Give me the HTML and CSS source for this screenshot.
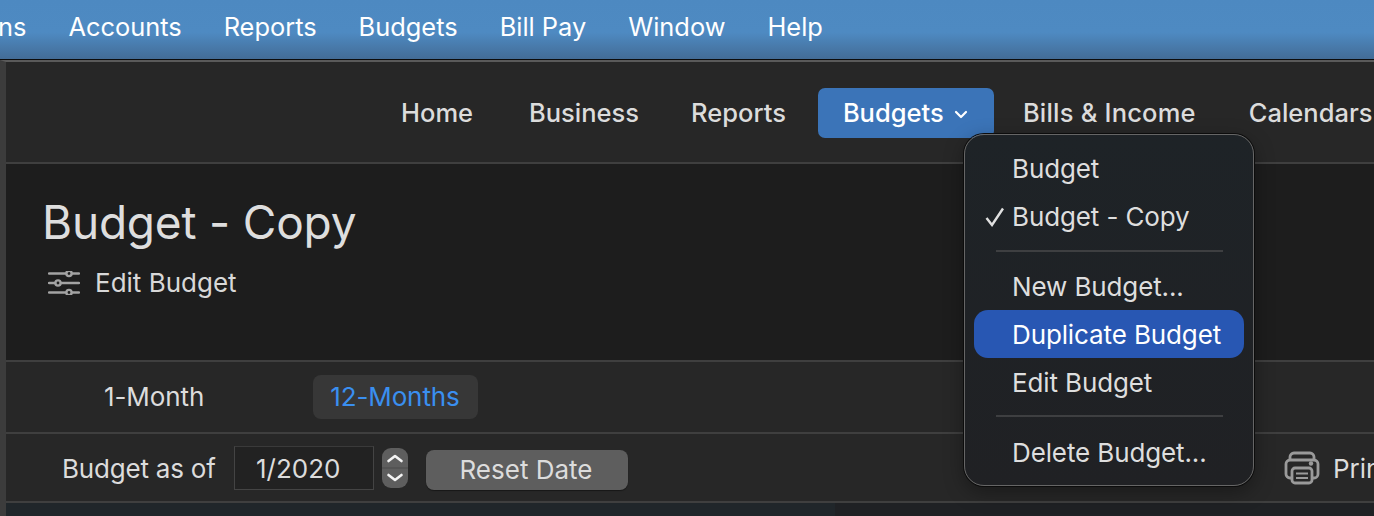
FILE: index.html
```html
<!DOCTYPE html>
<html lang="en">
<head>
    <meta charset="UTF-8">
    <title>Budget - Copy</title>
    <link rel="stylesheet" href="styles.css">
</head>
<body>
    <div class="menubar">
        <span class="menubar-item first">ns</span>
        <span class="menubar-item">Accounts</span>
        <span class="menubar-item">Reports</span>
        <span class="menubar-item">Budgets</span>
        <span class="menubar-item">Bill Pay</span>
        <span class="menubar-item">Window</span>
        <span class="menubar-item">Help</span>
    </div>

    <div class="window">
        <div class="navbar">
            <span class="nav-item home">Home</span>
            <span class="nav-item business">Business</span>
            <span class="nav-item reports">Reports</span>
            <span class="nav-item active">Budgets
                <svg class="nav-chevron" viewBox="0 0 14 9" width="14" height="9"><path d="M2 2l5 5 5-5" fill="none" stroke="#fff" stroke-width="2.200" stroke-linecap="round" stroke-linejoin="round"/></svg>
            </span>
            <span class="nav-item bills">Bills &amp; Income</span>
            <span class="nav-item calendars">Calendars</span>
        </div>

        <div class="header">
            <h1>Budget - Copy</h1>
            <div class="edit-link">
                <svg viewBox="0 0 32 24" width="32" height="24">
                    <path d="M1 2.500h30M1 12h30M1 21.500h30" stroke="#a3a3a3" stroke-width="2.400" stroke-linecap="round" fill="none"/>
                    <g stroke="#a3a3a3" stroke-width="2.400" fill="#1d1d1d">
                        <circle cx="21" cy="2.500" r="2.600"/>
                        <circle cx="10" cy="12" r="2.600"/>
                        <circle cx="21" cy="21.500" r="2.600"/>
                    </g>
                </svg>
                <span>Edit Budget</span>
            </div>
        </div>

        <div class="tabs">
            <span class="tab">1-Month</span>
            <span class="tab selected">12-Months</span>
        </div>

        <div class="toolbar">
            <span class="as-of">Budget as of</span>
            <span class="date-field">1/2020</span>
            <span class="stepper">
                <svg viewBox="0 0 26 40" width="26" height="40">
                    <path d="M6.500 13l6.500-5 6.500 5M6.500 27l6.500 5 6.500-5" fill="none" stroke="#f4f4f4" stroke-width="2.600" stroke-linecap="round" stroke-linejoin="round"/>
                    <path d="M0 20h26" stroke="#4a4a4a" stroke-width="1"/>
                </svg>
            </span>
            <span class="reset-btn">Reset Date</span>
            <span class="print">
                <svg viewBox="0 0 36 34" width="36" height="34">
                    <g fill="none" stroke="#9a9a9a" stroke-width="2.800" stroke-linejoin="round">
                        <path d="M6 9V6a4 4 0 0 1 4-4h16a4 4 0 0 1 4 4v3"/>
                        <path d="M7 27H6a4 4 0 0 1-4-4V13a4 4 0 0 1 4-4h24a4 4 0 0 1 4 4v10a4 4 0 0 1-4 4h-1"/>
                        <rect x="8" y="17" width="20" height="15" rx="3"/>
                    </g>
                    <path d="M12 22.500h12M12 27h12" stroke="#9a9a9a" stroke-width="2"/>
                    <circle cx="27" cy="12.500" r="2.200" fill="#9a9a9a"/>
                </svg>
                <span>Print</span>
            </span>
        </div>

        <div class="bottom">
            <div class="bottom-left"></div>
            <div class="bottom-right"></div>
        </div>
    </div>

    <div class="menu">
        <div class="menu-item">Budget</div>
        <div class="menu-item checked">
            <svg class="check" viewBox="0 0 20 20" width="20" height="20"><path d="M1.500 11l5.500 7L18 1.500" fill="none" stroke="#e0e0e0" stroke-width="2.400"/></svg>
            Budget - Copy
        </div>
        <div class="menu-sep"></div>
        <div class="menu-item low">New Budget...</div>
        <div class="menu-item low hover">Duplicate Budget</div>
        <div class="menu-item low">Edit Budget</div>
        <div class="menu-sep last"></div>
        <div class="menu-item low">Delete Budget...</div>
    </div>
</body>
</html>
```

FILE: styles.css
```css
html, body {
    margin: 0;
    padding: 0;
    height: 516px;
    overflow: hidden;
}

body {
    font-family: 'Inter', 'Liberation Sans', sans-serif;
    background: #272727;
    color: #e0e0e0;
    position: relative;
}

.menubar {
    display: flex;
    align-items: center;
    gap: 42px;
    box-sizing: border-box;
    height: 60px;
    padding-bottom: 6px;
    background: linear-gradient(180deg, #4d89c1 0%, #4e8ac2 55%, #436c96 100%);
    border-bottom: 1px solid #0c0c0c;
    color: #fff;
    font-size: 25.400px;
    white-space: nowrap;
}

.menubar-item.first {
    margin-left: -2px;
}

.window {
    border-left: 6px solid #3c3c3c;
    border-top: 2px solid #5a5a5a;
    box-sizing: border-box;
    height: 456px;
    display: flex;
    flex-direction: column;
}

.navbar {
    height: 100px;
    flex: none;
    display: flex;
    align-items: center;
    padding-left: 395px;
    box-sizing: border-box;
    background: #272727;
    font-size: 25.500px;
    font-weight: 500;
    color: #dcdcdc;
    white-space: nowrap;
}

.nav-item {
    flex: none;
}

.home { margin-right: 56px; }
.business { margin-right: 52px; }
.reports { margin-right: 32px; }
.bills { margin-left: 29px; margin-right: 53px; letter-spacing: 0.2px; }

.nav-item.active {
    width: 176px;
    height: 50px;
    margin-top: 2px;
    padding: 0 0 2px 25px;
    box-sizing: border-box;
    display: flex;
    align-items: center;
    gap: 10px;
    background: #3b74b8;
    border-radius: 7px;
    color: #fff;
}

.nav-chevron {
    margin-top: 5px;
}

.header {
    height: 200px;
    flex: none;
    box-sizing: border-box;
    padding: 30px 0 0 36px;
    background: #1d1d1d;
    border-top: 2px solid #3f3f3f;
    border-bottom: 2px solid #3f3f3f;
}

h1 {
    margin: 0;
    font-size: 46px;
    line-height: 56px;
    font-weight: 400;
    color: #dedede;
    letter-spacing: -0.2px;
}

.edit-link {
    margin-top: 17px;
    margin-left: 6px;
    display: flex;
    align-items: center;
    gap: 15px;
    font-size: 26px;
    color: #d8d8d8;
}

.tabs {
    height: 70px;
    flex: none;
    display: flex;
    align-items: center;
    padding-left: 98px;
    font-size: 26px;
    color: #dcdcdc;
    letter-spacing: -0.1px;
}

.tab {
    height: 44px;
    line-height: 44px;
    border-radius: 8px;
    margin-right: 109px;
}

.tab.selected {
    padding: 0 18px 0 17px;
    background: #373737;
    color: #3a8ff0;
}

.toolbar {
    height: 71px;
    flex: none;
    box-sizing: border-box;
    display: flex;
    align-items: center;
    padding-left: 56px;
    padding-top: 1px;
    border-top: 2px solid #3f3f3f;
    border-bottom: 2px solid #3f3f3f;
    font-size: 26px;
    color: #dcdcdc;
    white-space: nowrap;
}

.as-of {
    width: 172px;
    flex: none;
    letter-spacing: -0.2px;
}

.date-field {
    width: 140px;
    height: 44px;
    line-height: 44px;
    box-sizing: border-box;
    padding-left: 21px;
    flex: none;
    border: 1px solid #444;
    border-top-color: #3a3a3a;
    background: #222;
}

.stepper {
    width: 26px;
    height: 40px;
    flex: none;
    margin-left: 8px;
    display: flex;
    background: #5e5e5e;
    border-radius: 9px;
}

.reset-btn {
    width: 202px;
    height: 40px;
    line-height: 40px;
    box-sizing: border-box;
    padding-right: 2px;
    flex: none;
    margin-left: 18px;
    margin-top: 3px;
    text-align: center;
    background: #5e5e5e;
    border-radius: 8px;
    box-shadow: 0 1px 1px rgba(0, 0, 0, 0.4);
}

.print {
    flex: none;
    margin-left: 656px;
    display: flex;
    align-items: center;
    gap: 13px;
}

.bottom {
    flex: 1;
    display: flex;
}

.bottom-left {
    width: 829px;
    background: #20262a;
}

.bottom-right {
    flex: 1;
    background: #1f2124;
}

/* dropdown opened under Budgets */
.menu {
    position: absolute;
    left: 964px;
    top: 134px;
    width: 290px;
    height: 352px;
    box-sizing: border-box;
    padding: 10px 9px;
    background: linear-gradient(180deg, #1e2327 0%, #202124 100%);
    border: 1px solid #666;
    border-radius: 20px;
    box-shadow: 0 0 0 1px #0c0c0c, 0 6px 20px rgba(0, 0, 0, 0.35);
    font-size: 26px;
    color: #dedede;
}

.menu-item {
    height: 48px;
    line-height: 48px;
    padding-left: 38px;
    border-radius: 14px;
    position: relative;
    white-space: nowrap;
    letter-spacing: -0.12px;
}

.menu-item.low {
    line-height: 50px;
}

.menu-item.hover {
    background: #2857b3;
    color: #fff;
}

.check {
    position: absolute;
    left: 11px;
    top: 14px;
}

.menu-sep {
    height: 2px;
    margin: 9px 21px 10px 22px;
    background: #3e3f41;
}

.menu-sep.last {
    margin-bottom: 11px;
}
```
